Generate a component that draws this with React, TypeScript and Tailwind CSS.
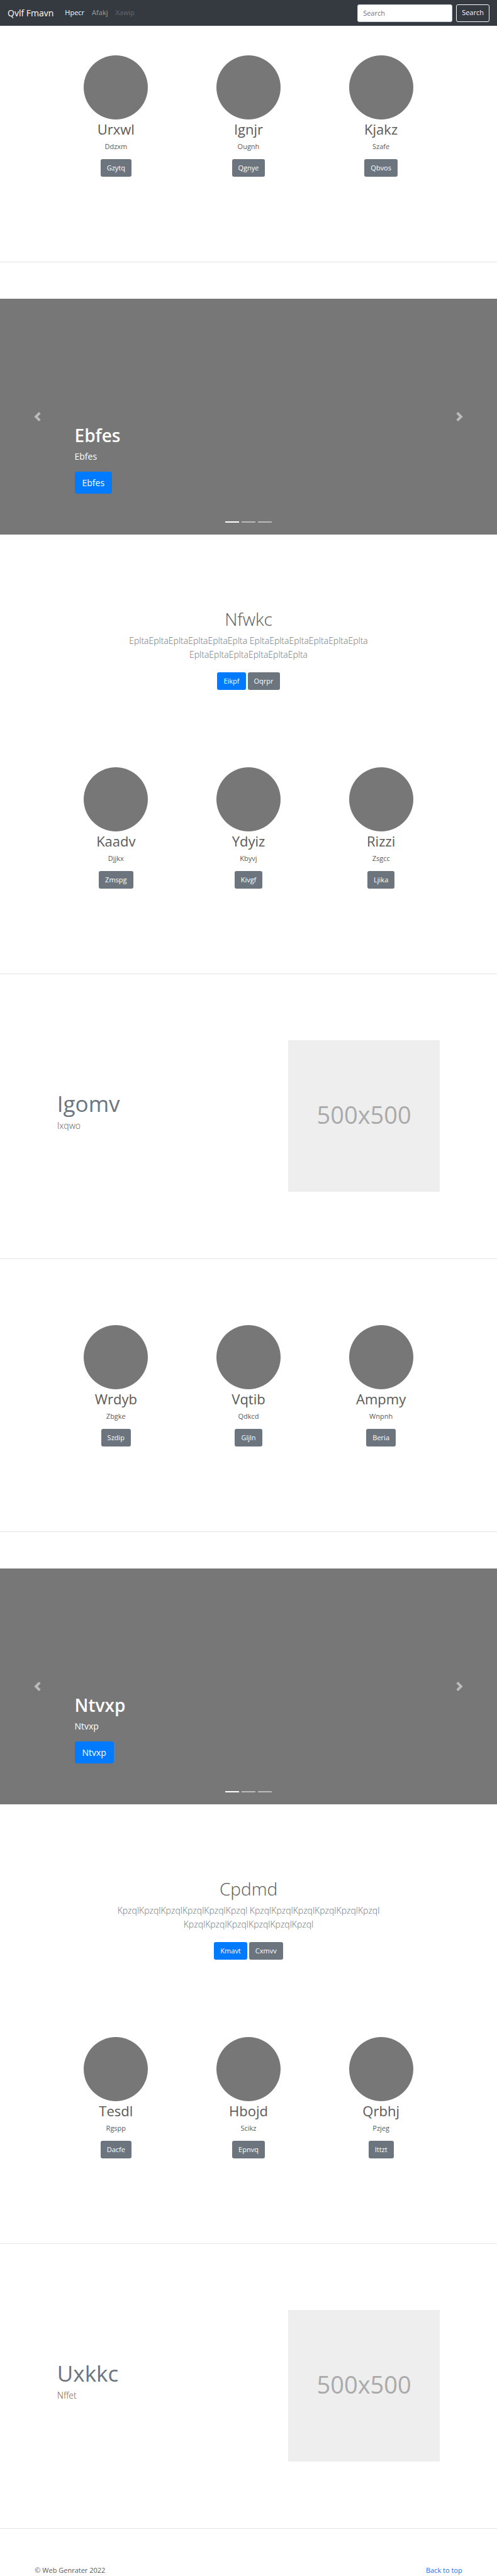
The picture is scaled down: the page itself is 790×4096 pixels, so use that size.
type Person = { name: string; text: string; action: string };

const teams: Person[][] = [
  [
    { name: 'Urxwl', text: 'Ddzxm', action: 'Gzytq' },
    { name: 'Ignjr', text: 'Ougnh', action: 'Qgnye' },
    { name: 'Kjakz', text: 'Szafe', action: 'Qbvos' },
  ],
  [
    { name: 'Kaadv', text: 'Djjkx', action: 'Zmspg' },
    { name: 'Ydyiz', text: 'Kbyvj', action: 'Kivgf' },
    { name: 'Rizzi', text: 'Zsgcc', action: 'Ljika' },
  ],
  [
    { name: 'Wrdyb', text: 'Zbgke', action: 'Szdip' },
    { name: 'Vqtib', text: 'Qdkcd', action: 'Gljln' },
    { name: 'Ampmy', text: 'Wnpnh', action: 'Beria' },
  ],
  [
    { name: 'Tesdl', text: 'Rgspp', action: 'Dacfe' },
    { name: 'Hbojd', text: 'Scikz', action: 'Epnvq' },
    { name: 'Qrbhj', text: 'Pzjeg', action: 'Ittzt' },
  ],
];

const button = 'inline-flex h-7 items-center rounded-[3px] px-[10px] text-[11px] text-white';

function Navbar() {
  return (
    <nav className="flex h-[41px] items-center bg-[#343a40] px-3 text-[11px]">
      <a href="#" className="mr-[18px] text-[14px] text-white">Qvlf Fmavn</a>
      <div className="flex gap-3">
        <a href="#" className="text-white">Hpecr</a>
        <a href="#" className="text-white/50">Afakj</a>
        <a href="#" aria-disabled="true" className="text-white/25">Xawip</a>
      </div>
      <form className="ml-auto flex gap-[6px]">
        <input
          type="search"
          aria-label="Search"
          placeholder="Search"
          className="h-7 w-[151px] rounded-[3px] border border-[#ced4da] bg-white px-2 text-[#495057] placeholder:text-[#6c757d]"
        />
        <button type="button" className="h-7 rounded-[3px] border border-[#f8f9fa] px-2 text-[#f8f9fa]">
          Search
        </button>
      </form>
    </nav>
  );
}

function Divider() {
  return <hr className="border-t border-[#e5e5e5]" />;
}

function Team({ people }: { people: Person[] }) {
  return (
    <section className="mx-auto grid w-4/5 grid-cols-3 pb-[135px]">
      {people.map((p) => (
        <div key={p.name} className="flex flex-col items-center">
          <div className="size-[102px] rounded-full bg-[#777777]" />
          <h2 className="text-[22px] leading-[30px]">{p.name}</h2>
          <p className="mt-1 text-[11px] leading-[18px]">{p.text}</p>
          <a href="#" className={`${button} mt-[11px] bg-[#6c757d]`}>{p.action}</a>
        </div>
      ))}
    </section>
  );
}

function Carousel({ label }: { label: string }) {
  return (
    <section className="relative mt-[58px] flex h-[375px] flex-col items-start justify-end bg-[#777777] px-[15%] pb-[65px] text-white">
      <h1 className="text-[28px] leading-[35px] font-semibold">{label}</h1>
      <p className="mt-[5px] text-[14px] leading-[22px]">{label}</p>
      <a href="#" className="mt-[13px] inline-flex h-[35px] items-center rounded-[4px] bg-[#007bff] px-3 text-[14px]">
        {label}
      </a>
      <button type="button" aria-label="Previous" className="absolute inset-y-0 left-0 flex w-[15%] items-center justify-center opacity-50">
        <svg viewBox="0 0 8 8" className="size-[15px]" fill="#fff">
          <path d="M5.25 0l-4 4 4 4 1.5-1.5L4.25 4l2.5-2.5L5.25 0z" />
        </svg>
      </button>
      <button type="button" aria-label="Next" className="absolute inset-y-0 right-0 flex w-[15%] items-center justify-center opacity-50">
        <svg viewBox="0 0 8 8" className="size-[15px]" fill="#fff">
          <path d="M2.75 0l-1.5 1.5L3.75 4l-2.5 2.5L2.75 8l4-4-4-4z" />
        </svg>
      </button>
      <div className="absolute inset-x-0 bottom-[19px] flex justify-center gap-1">
        <span className="h-[2px] w-[22px] bg-white" />
        <span className="h-[2px] w-[22px] bg-white/50" />
        <span className="h-[2px] w-[22px] bg-white/50" />
      </div>
    </section>
  );
}

function Intro({ title, text, primary, secondary }: { title: string; text: string; primary: string; secondary: string }) {
  return (
    <section className="mx-auto max-w-[500px] pt-[117px] pb-[123px] text-center">
      <h1 className="text-[28px] leading-[35px] font-light">{title}</h1>
      <p className="mt-[6px] text-[14px] leading-[22px] font-light text-[#6c757d]">{text}</p>
      <div className="mt-[17px] flex justify-center gap-[3px]">
        <a href="#" className={`${button} bg-[#007bff]`}>{primary}</a>
        <a href="#" className={`${button} bg-[#6c757d]`}>{secondary}</a>
      </div>
    </section>
  );
}

function Featurette({ title, text }: { title: string; text: string }) {
  return (
    <section className="mx-auto flex w-[77%] items-center justify-between pt-[105px] pb-[106px]">
      <div className="pb-4">
        <h2 className="text-[35px] leading-[44px] text-[#6c757d]">{title}</h2>
        <p className="mt-[2px] text-[14px] leading-[22px] font-light">{text}</p>
      </div>
      <div className="flex size-[241px] items-center justify-center bg-[#eeeeee] pb-1 text-[38px] text-[#aaaaaa]">
        500x500
      </div>
    </section>
  );
}

export default function App() {
  return (
    <div className="bg-white font-['Open_Sans','Noto_Sans',sans-serif] text-[#5a5a5a]">
      <Navbar />
      <main>
        <div className="pt-[47px]">
          <Team people={teams[0]} />
        </div>
        <Divider />
        <Carousel label="Ebfes" />
        <Intro
          title="Nfwkc"
          text="EpltaEpltaEpltaEpltaEpltaEplta EpltaEpltaEpltaEpltaEpltaEplta EpltaEpltaEpltaEpltaEpltaEplta"
          primary="Eikpf"
          secondary="Oqrpr"
        />
        <Team people={teams[1]} />
        <Divider />
        <Featurette title="Igomv" text="Ixqwo" />
        <Divider />
        <div className="pt-[105px]">
          <Team people={teams[2]} />
        </div>
        <Divider />
        <Carousel label="Ntvxp" />
        <Intro
          title="Cpdmd"
          text="KpzqlKpzqlKpzqlKpzqlKpzqlKpzql KpzqlKpzqlKpzqlKpzqlKpzqlKpzql KpzqlKpzqlKpzqlKpzqlKpzqlKpzql"
          primary="Kmavt"
          secondary="Cxmvv"
        />
        <Team people={teams[3]} />
        <Divider />
        <Featurette title="Uxkkc" text="Nffet" />
        <Divider />
      </main>
      <footer className="flex justify-between px-[7%] pt-[57px] text-[11px] leading-[18px]">
        <p>© Web Genrater 2022</p>
        <a href="#" className="text-[#007bff]">Back to top</a>
      </footer>
    </div>
  );
}
